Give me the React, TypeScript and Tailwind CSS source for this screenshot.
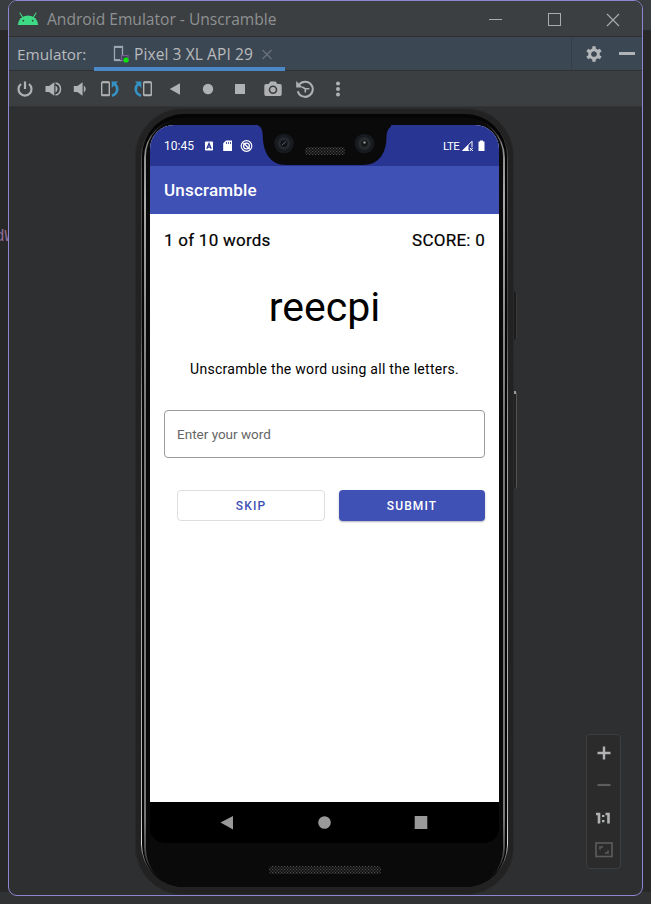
import type { ReactNode } from 'react';

function Ic({ children, className = '' }: { children: ReactNode; className?: string }) {
  return (
    <svg viewBox="0 0 20 20" className={`block h-5 w-5 shrink-0 ${className}`} fill="none" stroke="#afb1b3">
      {children}
    </svg>
  );
}

function TitleBar() {
  return (
    <div className="flex h-[36px] shrink-0 items-center border-b border-[#2d2f30] bg-[#3c3f41] pl-[8px] text-[#8e9193]">
      <svg viewBox="0 0 22 14" className="block h-[14px] w-[22px]">
        <path d="M0.8 13 A10.2 9.6 0 0 1 21.2 13 Z" fill="#3ddc84" />
        <path d="M5.6 5.2 L3 1 M16.4 5.2 L19 1" stroke="#3ddc84" strokeWidth="1.1" strokeLinecap="round" />
        <circle cx="6.3" cy="8.7" r="0.9" fill="#3c3f41" />
        <circle cx="15.7" cy="8.7" r="0.9" fill="#3c3f41" />
      </svg>
      <span className="ml-[8px] whitespace-nowrap text-[15.6px] leading-5">Android Emulator - Unscramble</span>
      <svg viewBox="0 0 140 16" className="ml-auto mr-[18px] block h-4 w-[140px]" fill="none" stroke="#a9abac">
        <path d="M5 8.5 H18" />
        <rect x="64.5" y="2.5" width="12" height="12" />
        <path d="M123 3 L135 15 M135 3 L123 15" strokeWidth="1.1" />
      </svg>
    </div>
  );
}

function TabBar() {
  return (
    <div className="flex h-[34px] shrink-0 border-b border-[#2e3133] bg-[#3c4754] text-[#b9bbbd]">
      <span className="w-[85px] pl-2 text-[15.3px] leading-[34px]">Emulator:</span>
      <div className="flex h-[34px] w-[191px] items-center border-b-4 border-[#4a88c7] pl-[18px] pt-[3px]">
        <svg viewBox="0 0 18 18" className="block h-[18px] w-[18px]">
          <rect x="2.5" y="1.5" width="8" height="14" fill="none" stroke="#9aa7b0" strokeWidth="1.3" />
          <path d="M2 1 H11 V3 H2 Z M2 14 H8 V16 H2 Z" fill="#9aa7b0" />
          <rect x="9.5" y="10.5" width="6.5" height="5" fill="#3c4754" stroke="#7a5f96" />
          <circle cx="14" cy="15" r="2.6" fill="#0be30b" />
        </svg>
        <span className="ml-1 whitespace-nowrap text-[15.5px] leading-5 tracking-[0.1px]">Pixel 3 XL API 29</span>
        <svg viewBox="0 0 12 12" className="ml-[8px] block h-3 w-3 shrink-0" stroke="#6a747e" strokeWidth="1.1">
          <path d="M1.5 2 L10.5 11 M10.5 2 L1.5 11" />
        </svg>
      </div>
      <div className="ml-auto flex w-[71px] items-center border-l border-[#353e48] pl-[14px]">
        <svg viewBox="0 0 16 16" className="block h-4 w-4" fill="none">
          <circle cx="8" cy="8" r="4.2" stroke="#b4b7ba" strokeWidth="3.2" />
          <path d="M8 0.2 V4 M8 12 V15.8 M1.25 4.1 L4.5 6 M11.5 10 L14.75 11.9 M1.25 11.9 L4.5 10 M11.5 6 L14.75 4.1" stroke="#b4b7ba" strokeWidth="3.4" />
          <circle cx="8" cy="8" r="2.6" fill="#3c4754" />
        </svg>
        <span className="ml-[17px] h-[3px] w-4 bg-[#b0b3b6]" />
      </div>
    </div>
  );
}

function ToolBar() {
  return (
    <div className="flex h-[36px] shrink-0 items-center border-b border-[#333436] bg-[#3c3f41] pl-[6px]">
      <Ic>
        <path d="M6 5 A6.5 6.5 0 1 0 14 5" strokeWidth="2.2" />
        <path d="M10 2.5 V10" strokeWidth="2.2" />
      </Ic>
      <Ic className="ml-[9px]">
        <path d="M1.5 7 H5 L10.3 3.3 V16.7 L5 13 H1.5 Z" fill="#afb1b3" stroke="none" />
        <path d="M11.5 6.5 A4 4 0 0 1 11.5 13.5 Z" fill="#afb1b3" stroke="none" />
        <path d="M11.5 4 A6.1 6.1 0 0 1 11.5 16" strokeWidth="1.5" />
      </Ic>
      <Ic className="ml-[6px]">
        <path d="M3.8 7 H7.3 L12.6 3.3 V16.7 L7.3 13 H3.8 Z" fill="#afb1b3" stroke="none" />
        <path d="M13.8 6.6 A4 4 0 0 1 13.8 13.4 Z" fill="#afb1b3" stroke="none" />
      </Ic>
      <Ic className="ml-[10px]">
        <rect x="1.7" y="3" width="7.6" height="13.5" rx="0.8" strokeWidth="1.4" />
        <path d="M2 3.3 H9 M2 16.2 H9" strokeWidth="1.8" />
        <path d="M12 16.8 C18.5 14.5 18.5 8 14.5 4.8" stroke="#3592c4" strokeWidth="2.6" />
        <path d="M11.7 2.5 H18 L11.7 9 Z" fill="#3592c4" stroke="none" />
      </Ic>
      <Ic className="ml-[13px]">
        <rect x="10.7" y="3" width="7.6" height="13.5" rx="0.8" strokeWidth="1.4" />
        <path d="M11 3.3 H18 M11 16.2 H18" strokeWidth="1.8" />
        <path d="M8 16.8 C1.5 14.5 1.5 8 5.5 4.8" stroke="#3592c4" strokeWidth="2.6" />
        <path d="M8.3 2.5 H2 L8.3 9 Z" fill="#3592c4" stroke="none" />
      </Ic>
      <Ic className="ml-[12px]">
        <path d="M4.7 10 L15 4.2 V15.8 Z" fill="#afb1b3" stroke="none" />
      </Ic>
      <Ic className="ml-[13px]">
        <circle cx="10" cy="10" r="5.2" fill="#afb1b3" stroke="none" />
      </Ic>
      <Ic className="ml-[12px]">
        <rect x="5" y="5" width="10" height="10" rx="0.5" fill="#afb1b3" stroke="none" />
      </Ic>
      <Ic className="ml-[13px]">
        <path d="M3 5 H5.6 L7.4 2.6 H12.6 L14.4 5 H17 A1.7 1.7 0 0 1 18.7 6.7 V15.3 A1.7 1.7 0 0 1 17 17 H3 A1.7 1.7 0 0 1 1.3 15.3 V6.7 A1.7 1.7 0 0 1 3 5 Z" fill="#afb1b3" stroke="none" />
        <circle cx="10" cy="10.8" r="3.5" stroke="#3c3f41" strokeWidth="1.6" />
      </Ic>
      <Ic className="ml-[12px]">
        <path d="M4.2 5.5 A7.6 7.6 0 1 1 2.8 12.2" strokeWidth="2" />
        <path d="M1.2 2 V8.4 H7.8 Z" fill="#afb1b3" stroke="none" />
        <path d="M10.3 13.5 V9.7 H14.3 M10.3 9.7 L7.2 8" strokeWidth="1.6" />
      </Ic>
      <Ic className="ml-[13px]">
        <g fill="#afb1b3" stroke="none">
          <circle cx="10" cy="4.4" r="2" />
          <circle cx="10" cy="10" r="2" />
          <circle cx="10" cy="15.6" r="2" />
        </g>
      </Ic>
    </div>
  );
}

function Notch() {
  return (
    <svg viewBox="0 0 133 42" className="absolute left-[108px] top-[-1px] block h-[42px] w-[133px]">
      <defs>
        <pattern id="mesh" width="3" height="3" patternUnits="userSpaceOnUse">
          <rect width="3" height="3" fill="#0c0c0c" />
          <rect width="1.2" height="1.2" fill="#4f4f4f" />
          <rect x="1.5" y="1.5" width="1.2" height="1.2" fill="#4f4f4f" />
        </pattern>
      </defs>
      <path d="M-6 1 H-4 C3 1 4.500 5 4.800 12 C5 28 12 41 28 41 H105 C121 41 128 29 128.500 14 C128.500 6 131 1.500 139 1 V0 H-6 Z" fill="#0a0a0a" />
      <circle cx="26" cy="19.500" r="9.800" fill="#171b20" />
      <circle cx="26" cy="19.500" r="6.500" fill="#23272c" />
      <circle cx="26" cy="19.500" r="4.200" fill="#111318" stroke="#34373b" strokeWidth="0.8" />
      <path d="M24 21 L28 17.500" stroke="#59636b" strokeWidth="1" />
      <circle cx="106.500" cy="19.500" r="9.800" fill="#171b20" />
      <circle cx="106.500" cy="19.500" r="6.500" fill="#26292b" />
      <circle cx="106.500" cy="19.500" r="4" fill="#141617" stroke="#34373a" strokeWidth="0.8" />
      <circle cx="106.500" cy="18.500" r="1.200" fill="#8b9294" />
      <rect x="47" y="23" width="40" height="8" rx="3" fill="url(#mesh)" />
    </svg>
  );
}

function StatusBar() {
  return (
    <div className="relative flex h-[41px] shrink-0 items-center bg-[#283593] pl-[14px] pr-[13px] text-white">
      <span className="w-[31px] whitespace-nowrap text-[12px] leading-4">10:45</span>
      <svg viewBox="0 0 50 14" className="ml-[9px] block h-[14px] w-[50px]">
        <rect x="1" y="2.500" width="8" height="9" rx="0.8" fill="#fff" />
        <path d="M2.800 9.800 L5 4.500 L7.200 9.800 M3.500 8.200 H6.500" fill="none" stroke="#283593" strokeWidth="1.3" />
        <path d="M22 1.500 H28 V12 H19.200 V4.300 Z" fill="#fff" />
        <path d="M22.500 3 V5 M24.500 3 V5 M26.500 3 V5" stroke="#283593" strokeWidth="0.8" />
        <circle cx="42.500" cy="7" r="5.300" fill="none" stroke="#fff" strokeWidth="1.200" />
        <circle cx="42.500" cy="7" r="2.900" fill="none" stroke="#fff" strokeWidth="1.300" />
        <path d="M39.500 4 L45.500 10" stroke="#fff" strokeWidth="1.300" />
      </svg>
      <span className="ml-auto text-[11.500px] leading-4 tracking-[-0.7px]">LTE</span>
      <svg viewBox="0 0 25 14" className="ml-[2px] block h-[14px] w-[25px]">
        <path d="M1.800 11.500 L11 2.300 V11.500 Z" fill="none" stroke="#fff" strokeWidth="1" />
        <path d="M1 12 L7.500 5.800 V12 Z" fill="#fff" />
        <path d="M8.500 8.500 L12 12 M12 8.500 L8.500 12" stroke="#283593" strokeWidth="2.400" />
        <path d="M8.800 8.800 L11.800 12 M11.800 8.800 L8.800 12" stroke="#fff" strokeWidth="1" />
        <path d="M17.500 2.500 H19 V1.500 H22 V2.500 H23.500 V12 H17.500 Z" fill="#fff" />
      </svg>
      <Notch />
    </div>
  );
}

function PhoneScreen() {
  return (
    <div className="flex h-[718px] w-[349px] shrink-0 flex-col overflow-hidden rounded-t-[24px] rounded-b-[15px] bg-[linear-gradient(180deg,#fff_600px,#000_600px)] font-[Roboto,sans-serif] text-black">
      <StatusBar />
      <div className="flex h-[48px] shrink-0 items-center bg-[#3f51b5] pl-[14px] pt-[2px] text-[17px] font-medium tracking-[0.2px] text-white shadow-[0_1px_2px_rgba(0,0,0,0.25)]">
        Unscramble
      </div>
      <div className="flex flex-1 flex-col bg-white px-[14px]">
        <div className="mt-[15px] flex justify-between text-[17px] leading-[22px] tracking-[0.25px] [-webkit-text-stroke:0.2px_black]">
          <span>1 of 10 words</span>
          <span>SCORE: 0</span>
        </div>
        <div className="mt-[31px] text-center text-[41px] leading-[50px]">reecpi</div>
        <div className="mt-[27px] text-center text-[14px] leading-[20px] tracking-[0.28px]">Unscramble the word using all the letters.</div>
        <div className="mt-[31px] flex h-[48px] items-center rounded-[4px] border border-[#9a9a9a] pl-[12px] text-[13.500px] text-[#666]">
          Enter your word
        </div>
        <div className="mt-[32px] flex gap-[14px] pl-[13px] text-[12px] font-medium tracking-[1.1px]">
          <div className="flex h-[31px] flex-1 items-center justify-center rounded-[4px] border border-[#dedede] text-[#3f51b5]">SKIP</div>
          <div className="flex h-[31px] flex-1 items-center justify-center rounded-[4px] bg-[#3f51b5] text-white shadow-[0_1px_2px_rgba(0,0,0,0.3)]">SUBMIT</div>
        </div>
      </div>
      <div className="h-[41px] shrink-0 bg-black">
        <svg viewBox="0 0 349 41" className="block h-[41px] w-[349px]" fill="#999">
          <path d="M70.500 20.500 L83 14 V27.500 Z" />
          <circle cx="174.500" cy="20.500" r="6.300" />
          <rect x="264.700" y="14" width="12.600" height="13" />
        </svg>
      </div>
    </div>
  );
}

function Phone() {
  return (
    <div className="relative ml-[126px] mt-[1px] h-[787px] w-[379px] shrink-0 rounded-[48px] border border-[#2a2a2a] bg-[#222] p-[5px] pb-[7px]">
      <div className="absolute right-[-4px] top-[182px] h-[49px] w-[3px] rounded-r-sm border-r border-[#3a3a3a] bg-[#1c1c1c]" />
      <div className="absolute right-[-4px] top-[282px] h-[98px] w-[3px] rounded-r-sm border-r border-[#555] bg-[#222]">
        <div className="h-[3px] bg-[#999]" />
      </div>
      <div className="h-full rounded-[43px] bg-[linear-gradient(180deg,#111_0,#333_20px,#555_60px,#444_200px,#999_300px,#bbb_700px,#ddd_730px,#0a0a0a_762px)] px-[1px]">
        <div className="h-full rounded-[42px] bg-[#050505] px-[2px] pt-[4px]">
          <div className="h-full rounded-[40px] bg-[linear-gradient(180deg,#0a0a0a_0,#888_25px,#aaa_80px,#777_300px,#777_700px,#444_740px,#0a0a0a_762px)] px-[2px]">
            <div className="flex h-full flex-col items-center rounded-[38px] bg-[#0a0a0a] pt-[7px]">
              <PhoneScreen />
              <svg viewBox="0 0 112 8" className="mt-[23px] block h-2 w-28 shrink-0">
                <rect width="112" height="8" rx="3" fill="url(#mesh)" />
              </svg>
            </div>
          </div>
        </div>
      </div>
    </div>
  );
}

function ZoomPanel() {
  return (
    <div className="absolute left-[577px] top-[733px] h-[135px] w-[35px] rounded-[4px] border border-[#3c3e40] bg-[#2b2b2b]">
      <svg viewBox="0 0 33 133" className="block h-[133px] w-[33px]" fill="none">
        <g transform="translate(0.5 -0.5)">
          <path d="M10 18.500 H23 M16.500 12 V25" stroke="#b0b2b4" strokeWidth="2.400" />
          <path d="M10 50.500 H23" stroke="#5b5d5f" strokeWidth="2.200" />
          <path d="M8.500 79.500 H11.500 V89 M18 79.500 H21 V89" stroke="#b0b2b4" strokeWidth="2.600" />
          <path d="M14.500 81.500 H16.900 M14.500 86.700 H16.900" stroke="#b0b2b4" strokeWidth="2.200" />
          <rect x="8.500" y="108.500" width="16" height="13.500" stroke="#5b5d5f" strokeWidth="1.600" />
          <path d="M12.500 115 V112.500 H15.500 M20.500 116 V118.500 H17.500" stroke="#5b5d5f" strokeWidth="1.500" />
        </g>
      </svg>
    </div>
  );
}

export default function App() {
  return (
    <div className="relative h-[904px] w-[651px] overflow-hidden bg-[linear-gradient(180deg,#3a3d3f_0,#3a3d3f_30px,#282828_30px,#282828_892px,#303234_892px)] pl-[8px] font-['Open_Sans','Noto_Sans',sans-serif]">
      <span className="absolute left-[-5px] top-[229px] font-['Liberation_Mono',monospace] text-[16px] leading-4 text-[#8d6a91]">dW</span>
      <div className="relative flex h-[896px] w-[635px] flex-col overflow-hidden rounded-[9px] border border-[#8d86d2] bg-[#2e2f31]">
        <TitleBar />
        <TabBar />
        <ToolBar />
        <Phone />
        <ZoomPanel />
      </div>
    </div>
  );
}
